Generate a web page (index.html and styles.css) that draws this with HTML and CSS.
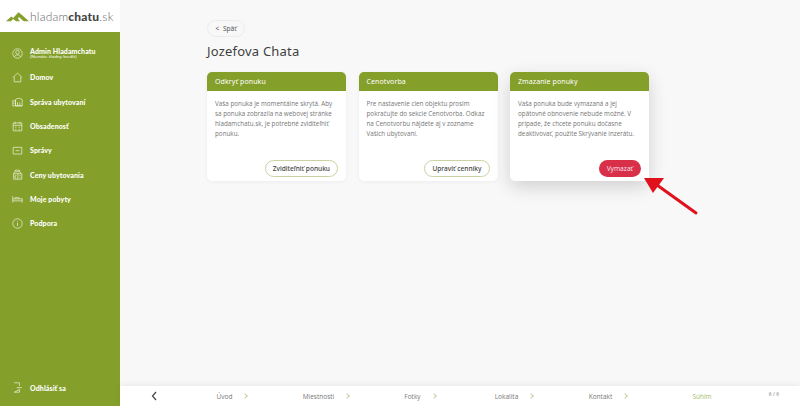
FILE: index.html
```html
<!DOCTYPE html>
<html lang="sk">
<head>
  <meta charset="UTF-8">
  <title>Jozefova Chata</title>
  <link rel="stylesheet" href="styles.css">
</head>
<body>

  <!-- Sidebar -->
  <aside class="sidebar">
    <div class="logo">
      <svg class="logo-mark" viewBox="0 0 24 11"><path d="M0 10.500 5.500 5.500l2 1.500L13 1l3 2.500 8 7h-5.500L13.500 6l-1 1.500 2 3H10.500L7.500 8l-2.500 2.500z" fill="#84a02a"/></svg>
      <span class="logo-text">hladam<b>chatu</b>.sk</span>
    </div>
    <nav class="menu">
      <a class="menu-item admin">
        <svg class="icon" viewBox="0 0 14 14"><circle cx="7" cy="7" r="6"/><circle cx="7" cy="5.500" r="2.300"/><path d="M3 11.500c.8-2 2.200-2.700 4-2.700s3.200.7 4 2.700"/></svg>
        <span class="admin-name">Admin Hladamchatu<small>(Nemáte žiadny kredit)</small></span>
      </a>
      <a class="menu-item">
        <svg class="icon" viewBox="0 0 14 14"><path d="M1 7 7 1.500 13 7M2.800 6v6.500h8.400V6"/></svg>
        Domov
      </a>
      <a class="menu-item">
        <svg class="icon" viewBox="0 0 14 14"><path d="M1 12.500V6h3.500v6.500M4.500 12.500V4.500C6.500 2.500 10 2.500 13 4.500v8zM1 12.500h12M7 12.500V8M10 12.500V8M2.500 8v2"/></svg>
        Správa ubytovaní
      </a>
      <a class="menu-item">
        <svg class="icon" viewBox="0 0 14 14"><path d="M1.500 2.500h11v10h-11zM1.500 5.500h11M4 1v3M10 1v3M4 8h1.500M8.500 8H10M4 10.500h1.500M8.500 10.500H10"/></svg>
        Obsadenosť
      </a>
      <a class="menu-item">
        <svg class="icon" viewBox="0 0 14 14"><path d="M1.500 3h11v8.500h-11zM4.500 7.200h5"/></svg>
        Správy
      </a>
      <a class="menu-item">
        <svg class="icon" viewBox="0 0 14 14"><path d="M2 6h10.500v7H2zM7.500 6v7M4 1.500h5.500v2H4zM3 3.500 2.500 6M10.500 3.500 11 6M9.500 8.500h1.500M9.500 10.500h1.500M5.500 8.500H4v3h1.500"/></svg>
        Ceny ubytovania
      </a>
      <a class="menu-item">
        <svg class="icon" viewBox="0 0 14 14"><path d="M1 4v8M1 10h12M13 7v5M1 7.500h12M4 7.500V6h5v1.500"/></svg>
        Moje pobyty
      </a>
      <a class="menu-item">
        <svg class="icon" viewBox="0 0 14 14"><circle cx="7" cy="7" r="6"/><path d="M7 6.200v4M7 3.800v1"/></svg>
        Podpora
      </a>
    </nav>
    <a class="menu-item logout">
      <svg class="icon" viewBox="0 0 14 14"><path d="M3 1h6.500v4M9.500 9.500V13H3zM6 7.200h6.500"/></svg>
      Odhlásiť sa
    </a>
  </aside>

  <div class="main">
    <main class="content">
      <button class="back"><span class="back-arrow">&lt;</span> Späť</button>
      <h1 class="title">Jozefova Chata</h1>

      <div class="cards">
        <section class="card">
          <h2 class="card-head">Odkryť ponuku</h2>
          <div class="card-body">
            <p>Vaša ponuka je momentálne skrytá. Aby sa ponuka zobrazila na webovej stránke hladamchatu.sk, je potrebné zviditeľniť ponuku.</p>
            <button class="btn">Zviditeľniť ponuku</button>
          </div>
        </section>

        <section class="card">
          <h2 class="card-head">Cenotvorba</h2>
          <div class="card-body">
            <p>Pre nastavenie cien objektu prosím pokračujte do sekcie Cenotvorba. Odkaz na Cenotvorbu nájdete aj v zozname Vašich ubytovaní.</p>
            <button class="btn">Upraviť cenníky</button>
          </div>
        </section>

        <section class="card card-raised">
          <h2 class="card-head">Zmazanie ponuky</h2>
          <div class="card-body">
            <p>Vaša ponuka bude vymazaná a jej opätovné obnovenie nebude možné. V prípade, že chcete ponuku dočasne deaktivovať, použite Skrývanie inzerátu.</p>
            <button class="btn btn-danger">Vymazať</button>
          </div>
          <!-- annotation arrow -->
          <svg class="arrow" viewBox="0 0 60 44"><path d="M53 40 14 12" stroke="#e0101c" stroke-width="3" stroke-linecap="round"/><path d="M1 5 21 5 10 20z" fill="#e0101c"/></svg>
        </section>
      </div>
    </main>

    <footer class="steps">
      <svg class="steps-back" viewBox="0 0 8 12"><path d="M6 2 2.500 6 6 10"/></svg>
      <span class="step">Úvod <i class="chev"></i></span>
      <span class="step">Miestnosti <i class="chev"></i></span>
      <span class="step">Fotky <i class="chev"></i></span>
      <span class="step">Lokalita <i class="chev"></i></span>
      <span class="step">Kontakt <i class="chev"></i></span>
      <span class="step step-active">Súhlm</span>
      <span class="step-count">6 / 6</span>
    </footer>
  </div>

</body>
</html>
```

FILE: styles.css
```css
* {
  margin: 0;
  padding: 0;
  box-sizing: border-box;
}

html, body {
  height: 100%;
  overflow: hidden;
}

body {
  display: flex;
  font-family: 'Noto Sans', sans-serif;
  background: #f8f8f8;
  color: #4a4a4a;
}

/* sidebar */
.sidebar {
  width: 120px;
  flex: none;
  display: flex;
  flex-direction: column;
  background: #84a02a;
  color: #fff;
}

.logo {
  height: 32px;
  background: #fff;
  display: flex;
  align-items: center;
  gap: 1px;
  padding-left: 6px;
}

.logo-mark {
  width: 23px;
  height: 11px;
}

.logo-text {
  font-family: 'Lato', sans-serif;
  font-size: 12px;
  font-weight: 300;
  letter-spacing: .2px;
  color: #666;
}

.logo-text b {
  font-weight: 900;
  color: #444;
}

.menu {
  display: flex;
  flex-direction: column;
  padding-top: 9px;
  flex: 1;
}

.menu-item {
  height: 24.300px;
  display: flex;
  align-items: center;
  gap: 7px;
  padding-left: 12px;
  font-family: 'Lato', sans-serif;
  font-size: 7px;
  font-weight: 900;
  letter-spacing: .1px;
}

.icon {
  width: 11px;
  height: 11px;
  flex: none;
  fill: none;
  stroke: #eef2dd;
  stroke-width: .9;
}

.admin-name small {
  display: block;
  font-size: 4.500px;
  font-weight: 400;
  line-height: 4px;
}

.admin-name {
  line-height: 7px;
}

.logout {
  height: 36px;
  padding-bottom: 1px;
}

/* main column */
.main {
  flex: 1;
  min-width: 0;
  display: flex;
  flex-direction: column;
}

.content {
  flex: 1;
  padding: 20px 0 0 87px;
}

.back {
  display: block;
  width: 38px;
  height: 17px;
  border: 1px solid #ececec;
  border-radius: 9px;
  background: #f8f8f8;
  font-family: 'Noto Sans', sans-serif;
  font-size: 6.500px;
  color: #555;
}

.back-arrow {
  margin-right: 2px;
}

.title {
  margin-top: 4px;
  font-size: 13px;
  line-height: 20px;
  font-weight: 400;
  letter-spacing: .2px;
  color: #3f3f3f;
}

.cards {
  display: flex;
  gap: 12.500px;
  margin-top: 11px;
}

.card {
  position: relative;
  width: 139px;
  height: 109px;
  display: flex;
  flex-direction: column;
  background: #fff;
  border-radius: 5px;
  box-shadow: 0 1px 4px rgba(0, 0, 0, .05);
}

.card-raised {
  box-shadow: 0 6px 18px rgba(0, 0, 0, .16);
}

.card-head {
  height: 19px;
  padding-left: 8px;
  background: #84a02a;
  border-radius: 5px 5px 0 0;
  color: #fff;
  font-size: 7px;
  font-weight: 400;
  line-height: 19px;
  letter-spacing: .1px;
}

.card-body {
  flex: 1;
  display: flex;
  flex-direction: column;
  align-items: flex-end;
  justify-content: space-between;
  padding: 8px 8px 4px 8px;
}

.card-body p {
  width: 100%;
  font-family: 'Open Sans', sans-serif;
  font-size: 6.300px;
  line-height: 10px;
  color: #777;
}

.btn {
  height: 17px;
  padding: 0 7px;
  border: 1px solid #c8d3a0;
  border-radius: 9px;
  background: #fff;
  font-family: 'Noto Sans', sans-serif;
  font-size: 6.600px;
  font-weight: 500;
  color: #444;
}

.btn-danger {
  border: 0;
  padding: 0 8px;
  background: #d9304a;
  color: #f8dfe2;
  font-weight: 400;
}

.arrow {
  position: absolute;
  left: 133px;
  top: 101px;
  width: 60px;
  height: 44px;
}

/* bottom steps */
.steps {
  height: 20px;
  flex: none;
  display: grid;
  grid-template-columns: 65px repeat(6, 94px) 1fr;
  align-items: center;
  background: #fff;
  box-shadow: 0 -1px 6px rgba(0, 0, 0, .07);
  font-family: 'Open Sans', sans-serif;
  font-size: 6.500px;
  color: #777;
}

.steps-back {
  width: 8px;
  height: 12px;
  justify-self: center;
  margin-left: 3px;
  fill: none;
  stroke: #444;
  stroke-width: 1.200;
}

.step {
  display: flex;
  justify-content: center;
  align-items: center;
  gap: 11px;
}

.step-active {
  color: #a3b96a;
}

.chev {
  width: 4px;
  height: 4px;
  border-top: 1px solid #c3d0a0;
  border-right: 1px solid #c3d0a0;
  transform: rotate(45deg);
}

.step-count {
  justify-self: end;
  margin: -5px 21px 0 0;
  font-size: 5px;
}
```
